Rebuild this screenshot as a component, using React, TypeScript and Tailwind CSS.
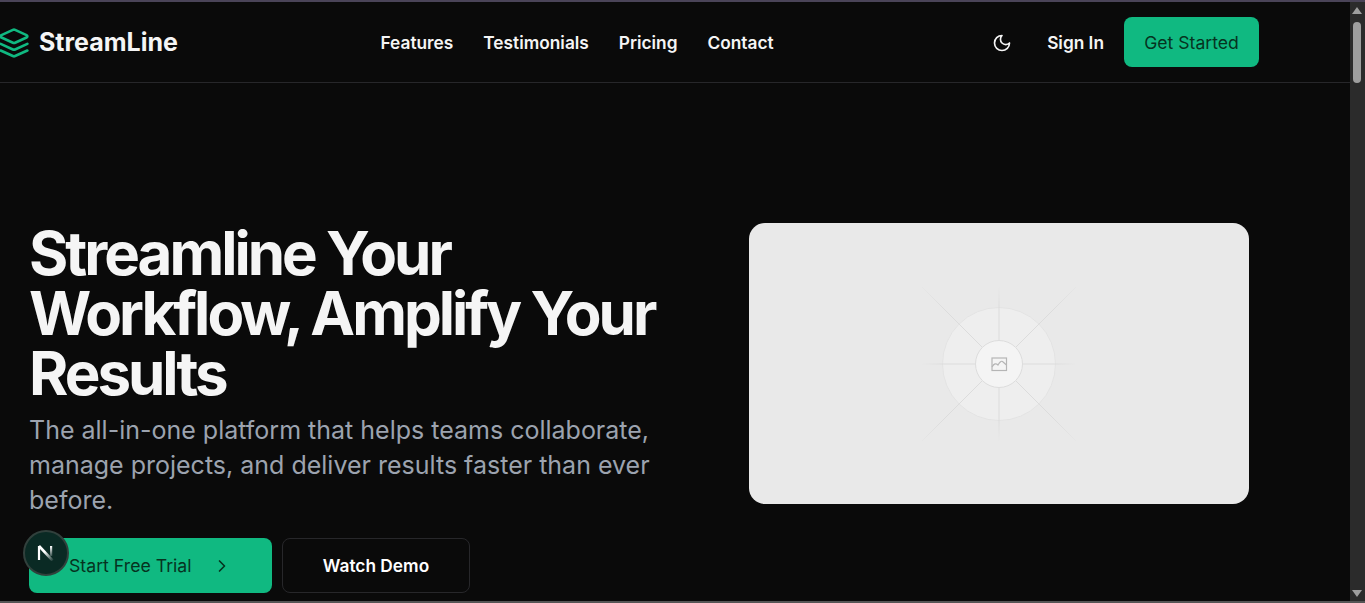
import { ChevronRight } from "lucide-react";

function Placeholder() {
  return (
    <div className="w-[500px] h-[281px] rounded-2xl bg-[#e9e9e9] flex items-center justify-center overflow-hidden">
      <svg width="160" height="160" viewBox="-80 -80 160 160" fill="none">
        <defs>
          <radialGradient id="fadeStraight" gradientUnits="userSpaceOnUse" cx="0" cy="0" r="78">
            <stop offset="0.72" stopColor="#dcdcdc" />
            <stop offset="1" stopColor="#e9e9e9" />
          </radialGradient>
          <radialGradient id="fadeDiagonal" gradientUnits="userSpaceOnUse" cx="0" cy="0" r="110">
            <stop offset="0.7" stopColor="#dcdcdc" />
            <stop offset="1" stopColor="#e7e7e7" />
          </radialGradient>
        </defs>
        <circle cx="0" cy="0" r="56.5" fill="#eeeeee" stroke="#e3e3e3" />
        <path d="M0 -78V-24M0 24V78" stroke="url(#fadeStraight)" />
        <path d="M-78 0H-24M24 0H78" stroke="url(#fadeStraight)" />
        <path d="M-77 -77L-17 -17M77 -77L17 -17M-77 77L-17 17M77 77L17 17" stroke="url(#fadeDiagonal)" />
        <circle cx="0" cy="0" r="23.5" fill="#f4f4f4" stroke="#dcdcdc" />
        <g stroke="#b5b5b5" strokeWidth="1.2">
          <rect x="-7" y="-6" width="14.5" height="12.5" />
          <path d="M-7 3C-5 -0.5 -3 -1 -1 1C0.5 -1.5 2 -3.5 3.5 -2.5C5 -1.5 6 0 7.5 1" />
        </g>
      </svg>
    </div>
  );
}

export default function App() {
  return (
    <div className="h-screen overflow-hidden flex flex-col bg-[#0a0a0a] font-['Inter',sans-serif] text-[#f5f5f5]">
      <div className="h-[2px] bg-[#4a4458] shrink-0" />
      <div className="flex flex-1 min-h-0">
        <div className="flex-1 min-w-0">
          <header className="h-[81px] pt-[1px] border-b border-[#27272a] flex items-center justify-between pr-[91px]">
            <div className="flex items-center gap-[9px] w-[200px] -ml-[2px]">
              <svg className="w-8 h-8 text-[#10b981] shrink-0" viewBox="0 0 24 24" fill="none" stroke="currentColor" strokeWidth="2" strokeLinecap="round" strokeLinejoin="round">
                <path d="m12.83 2.18a2 2 0 0 0-1.66 0L2.6 6.08a1 1 0 0 0 0 1.83l8.58 3.91a2 2 0 0 0 1.66 0l8.58-3.9a1 1 0 0 0 0-1.83Z" />
                <path d="m22 17.65-9.17 4.16a2 2 0 0 1-1.66 0L2 17.65" />
                <path d="m22 12.65-9.17 4.16a2 2 0 0 1-1.66 0L2 12.65" />
              </svg>
              <span className="text-[25px] font-bold">StreamLine</span>
            </div>
            <nav className="flex items-center gap-[30px] text-[17.3px] font-semibold -ml-[36px]">
              <span>Features</span>
              <span>Testimonials</span>
              <span>Pricing</span>
              <span>Contact</span>
            </nav>
            <div className="flex items-center">
              <svg className="w-5 h-5 mr-[35px]" viewBox="0 0 24 24" fill="none" stroke="currentColor" strokeWidth="2" strokeLinecap="round" strokeLinejoin="round">
                <path d="M12 3a6 6 0 0 0 9 9 9 9 0 1 1-9-9Z" />
              </svg>
              <span className="text-[17.3px] font-semibold mr-5">Sign In</span>
              <div className="w-[135px] h-[50px] -mt-[1px] pt-[2px] rounded-lg bg-[#10b981] flex items-center justify-center text-[17.6px] text-[#06331f]">
                Get Started
              </div>
            </div>
          </header>
          <main className="flex items-start pl-[29px] pt-[140px]">
            <div className="w-[720px] shrink-0 flex flex-col">
              <h1 className="text-[60px] leading-[60px] font-bold tracking-tighter w-[680px]">
                Streamline Your Workflow, Amplify Your Results
              </h1>
              <p className="mt-[10px] text-[25px] leading-[35px] text-[#9ca3af] w-[640px]">
                The all-in-one platform that helps teams collaborate, manage projects, and deliver results faster than ever before.
              </p>
              <div className="mt-[20px] flex gap-[10px] relative">
                <div className="w-[243px] h-[55px] pt-[1px] rounded-lg bg-[#10b981] flex items-center pl-[40px] text-[17.7px] text-[#06331f]">
                  Start Free Trial
                  <ChevronRight className="w-5 h-5 ml-[20px]" />
                </div>
                <div className="w-[188px] h-[55px] rounded-lg border border-[#27272a] flex items-center justify-center text-[17.3px] font-semibold text-white">
                  Watch Demo
                </div>
                <div className="absolute left-[-6px] top-[-8px] w-[46px] h-[46px] rounded-full bg-[#0a2a24] border-2 border-[#31403c] flex items-center justify-center">
                  <svg width="18" height="16" viewBox="0 0 18 16" fill="none">
                    <defs>
                      <linearGradient id="nDiag" x1="2" y1="0" x2="15" y2="15" gradientUnits="userSpaceOnUse">
                        <stop offset="0.45" stopColor="#ffffff" />
                        <stop offset="1" stopColor="#ffffff" stopOpacity="0.15" />
                      </linearGradient>
                      <linearGradient id="nRight" x1="15" y1="1" x2="15" y2="11" gradientUnits="userSpaceOnUse">
                        <stop offset="0" stopColor="#ffffff" />
                        <stop offset="1" stopColor="#ffffff" stopOpacity="0.2" />
                      </linearGradient>
                    </defs>
                    <path d="M2 1V15" stroke="#ffffff" strokeWidth="2.2" />
                    <path d="M2 1L15.5 15.5" stroke="url(#nDiag)" strokeWidth="2.6" />
                    <rect x="13" y="1" width="2.2" height="10" fill="url(#nRight)" />
                  </svg>
                </div>
              </div>
            </div>
            <Placeholder />
          </main>
        </div>
        <div className="w-[15px] shrink-0 bg-[#2b2b2b] flex flex-col items-center justify-between pt-[5px] pb-[4px] pr-[1px]">
          <div className="flex flex-col items-center">
            <div className="w-0 h-0 border-x-[5px] border-x-transparent border-b-[7px] border-b-[#9e9e9e]" />
            <div className="mt-[8px] w-[8px] h-[61px] rounded-full bg-[#9e9e9e]" />
          </div>
          <div className="w-0 h-0 border-x-[5px] border-x-transparent border-t-[7px] border-t-[#9e9e9e]" />
        </div>
      </div>
      <div className="h-[2px] bg-[#555555] shrink-0" />
    </div>
  );
}
